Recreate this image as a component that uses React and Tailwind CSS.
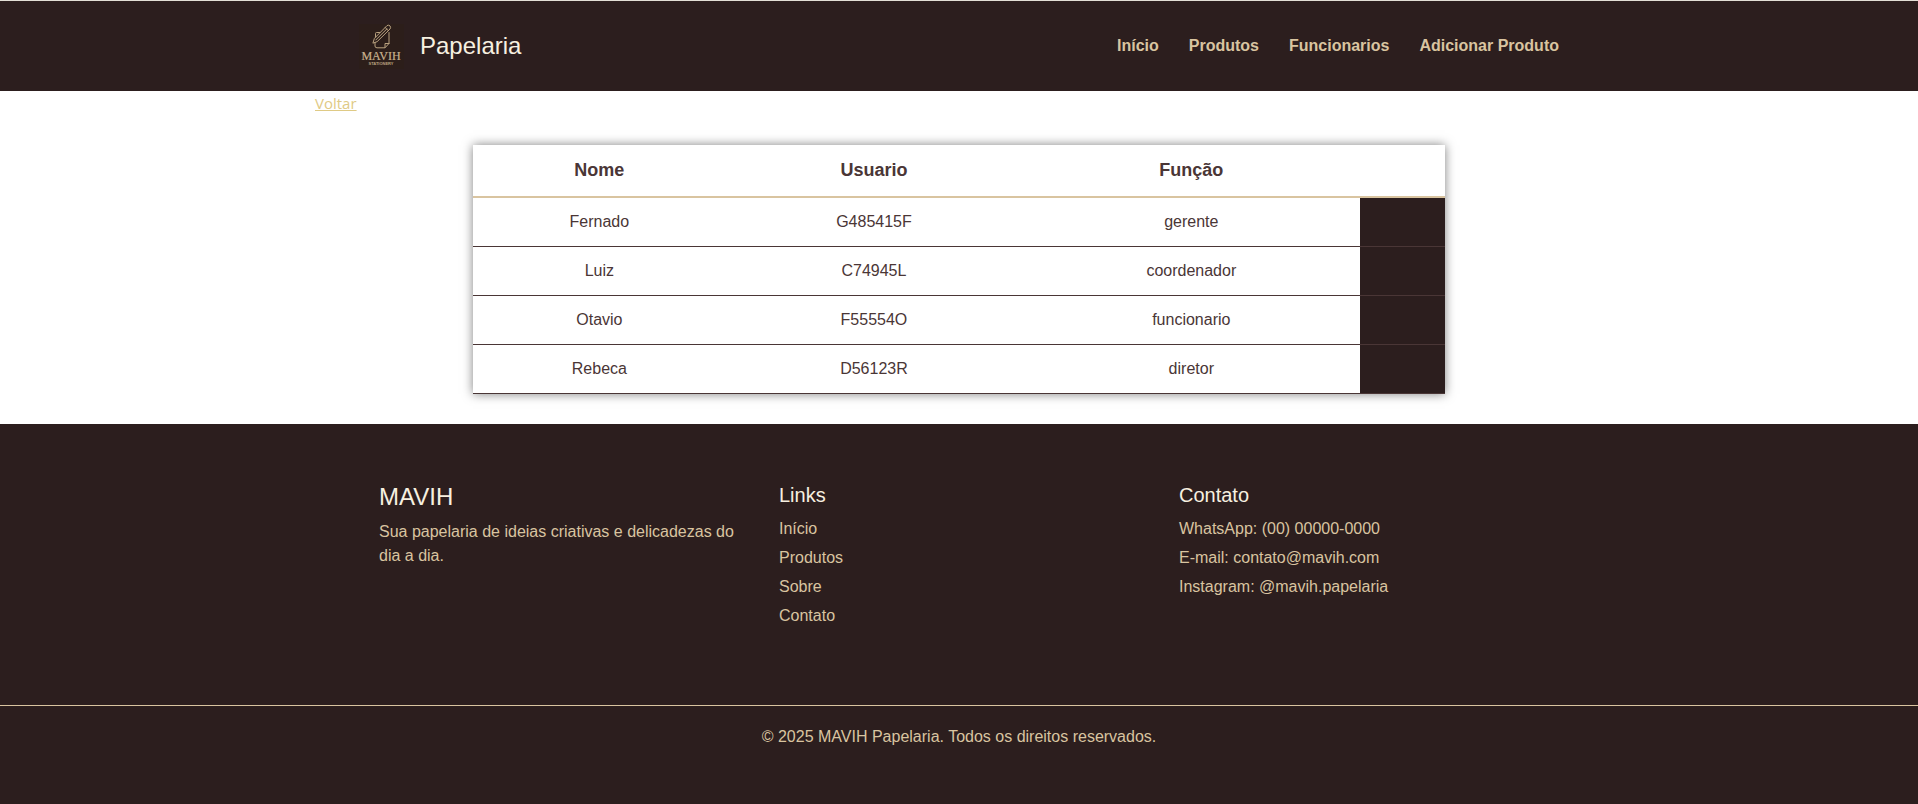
const navLinks = ["Início", "Produtos", "Funcionarios", "Adicionar Produto"];

const employees = [
  { name: "Fernado", user: "G485415F", role: "gerente" },
  { name: "Luiz", user: "C74945L", role: "coordenador" },
  { name: "Otavio", user: "F55554O", role: "funcionario" },
  { name: "Rebeca", user: "D56123R", role: "diretor" },
];

const footerLinks = ["Início", "Produtos", "Sobre", "Contato"];

const contacts = [
  "WhatsApp: (00) 00000-0000",
  "E-mail: contato@mavih.com",
  "Instagram: @mavih.papelaria",
];

function Logo() {
  return (
    <svg viewBox="0 0 45 45" className="size-[45px] shrink-0" role="img" aria-label="MAVIH Stationery">
      <rect width="45" height="45" fill="#2c1e1a" />
      <g fill="none" stroke="#b9a17f" strokeWidth="1" strokeLinejoin="round" strokeLinecap="round">
        <path d="M21.5 8.5H17.5Q16.5 8.5 16.5 9.5V14M16 18.5V22Q16 23.8 18 23.8H26L30 19.5V8.5" />
        <path d="M26 23.5V19.5H30" />
        <path d="M14 18.8L15.4 14.4L28 1.6Q29.6 0.6 31 1.9Q32.2 3.4 31 5L18.4 17.4Z" fill="#2c1e1a" />
        <path d="M16.9 15.9L27.8 5M26.2 3.4L29.2 6.6" />
      </g>
      <text x="22" y="36" textAnchor="middle" fill="#c9b28e" stroke="#c9b28e" strokeWidth="0.2" className="font-['Liberation_Serif',serif] text-[12px]">
        MAVIH
      </text>
      <text x="22" y="41" textAnchor="middle" fill="#b9a17f" className="font-['Liberation_Sans',sans-serif] text-[4px] font-bold">
        STATIONERY
      </text>
    </svg>
  );
}

export default function App() {
  return (
    <div className="flex min-h-screen flex-col bg-white font-['Liberation_Sans',Arial,sans-serif] text-base text-[#4a3636]">
      <header className="border-t border-[#e3dfd6] bg-[#2c1e1e]">
        <div className="mx-auto flex h-[90px] max-w-[1200px] items-center justify-between">
          <div className="flex items-center gap-4">
            <Logo />
            <h1 className="text-2xl text-[#f7f0e0]">Papelaria</h1>
          </div>
          <nav>
            <ul className="flex gap-[30px]">
              {navLinks.map((label) => (
                <li key={label}>
                  <a href="#" className="font-bold text-[#d9c4a0]">{label}</a>
                </li>
              ))}
            </ul>
          </nav>
        </div>
      </header>

      <main>
        <div className="mx-auto max-w-[1288px]">
          <a href="#" className="block w-fit font-['Open_Sans',sans-serif] text-[15px] leading-6 text-[#dfca85] underline">Voltar</a>
        </div>
        <table className="mx-auto my-[30px] w-full max-w-[972px] table-fixed border-separate border-spacing-0 bg-white text-center shadow-[0_0_10px_rgba(0,0,0,0.5)]">
          <thead>
            <tr className="h-[53px] text-lg leading-6">
              <th className="w-[26%] border-b-2 border-[#d9c4a0] pb-0.5">Nome</th>
              <th className="w-[30.5%] border-b-2 border-[#d9c4a0] pb-0.5">Usuario</th>
              <th className="w-[34.8%] border-b-2 border-[#d9c4a0] pb-0.5">Função</th>
              <td className="border-b-2 border-[#d9c4a0]" />
            </tr>
          </thead>
          <tbody>
            {employees.map(({ name, user, role }) => (
              <tr key={user} className="h-[49px]">
                <td className="border-b border-[#4a3636]">{name}</td>
                <td className="border-b border-[#4a3636]">{user}</td>
                <td className="border-b border-[#4a3636]">{role}</td>
                <td className="border-b border-[#4a3636] bg-[#2c1e1e]" />
              </tr>
            ))}
          </tbody>
        </table>
      </main>

      <footer className="flex-1 bg-[#2c1e1e] pt-[60px] text-[#d9c4a0]">
        <div className="mx-auto grid max-w-[1200px] grid-cols-3 gap-10 px-5">
          <section>
            <h2 className="mb-2.5 text-2xl leading-[26px] text-[#f7f0e0]">MAVIH</h2>
            <p>Sua papelaria de ideias criativas e delicadezas do dia a dia.</p>
          </section>
          <section>
            <h3 className="mb-2.5 text-xl leading-[23px] text-[#f7f0e0]">Links</h3>
            <ul className="flex flex-col gap-[5px]">
              {footerLinks.map((label) => (
                <li key={label}>
                  <a href="#">{label}</a>
                </li>
              ))}
            </ul>
          </section>
          <section>
            <h3 className="mb-2.5 text-xl leading-[23px] text-[#f7f0e0]">Contato</h3>
            <ul className="flex flex-col gap-[5px]">
              {contacts.map((line) => (
                <li key={line}>{line}</li>
              ))}
            </ul>
          </section>
        </div>
        <p className="mt-[77px] border-t border-[#d9c4a0] pt-[19px] pb-10 text-center">
          © 2025 MAVIH Papelaria. Todos os direitos reservados.
        </p>
      </footer>
    </div>
  );
}
